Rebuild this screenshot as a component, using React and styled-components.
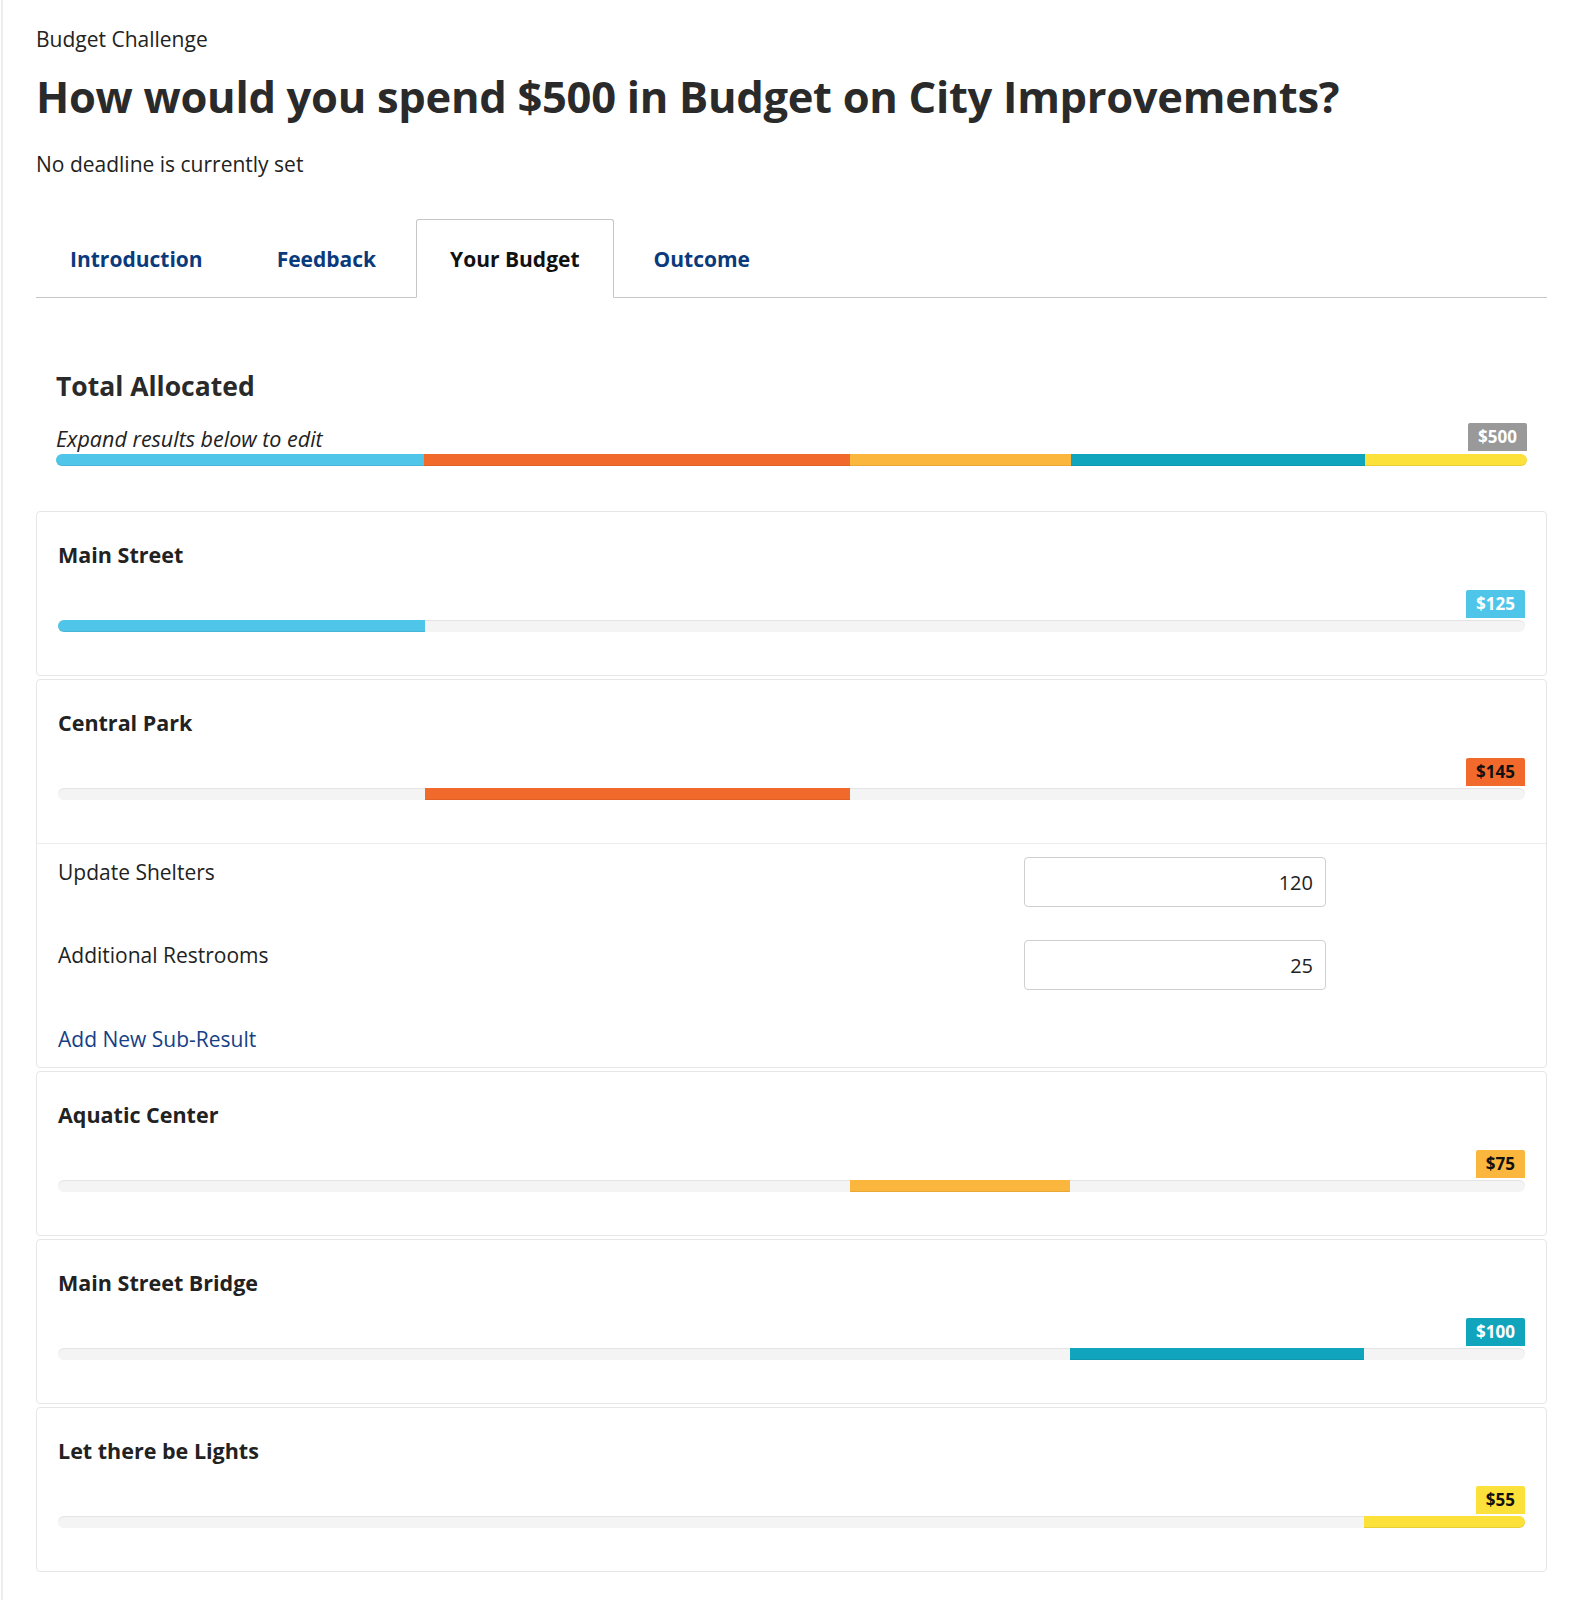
import styled, { createGlobalStyle } from "styled-components";

const GlobalStyle = createGlobalStyle`
  body {
    margin: 0;
    background: #fff;
    font-family: "Open Sans", "Liberation Sans", sans-serif;
    color: #222;
  }
  * { box-sizing: border-box; }
`;

const TOTAL = 500;

const results = [
  { name: "Main Street", amount: 125, color: "#4fc6e9", text: "#fff" },
  {
    name: "Central Park",
    amount: 145,
    color: "#f26a2b",
    text: "#111",
    subs: [
      { name: "Update Shelters", value: 120 },
      { name: "Additional Restrooms", value: 25 },
    ],
  },
  { name: "Aquatic Center", amount: 75, color: "#fbb73d", text: "#111" },
  { name: "Main Street Bridge", amount: 100, color: "#11a5bd", text: "#fff" },
  { name: "Let there be Lights", amount: 55, color: "#fde13b", text: "#111" },
];

const tabs = ["Introduction", "Feedback", "Your Budget", "Outcome"];

export default function App() {
  let offset = 0;
  const rows = results.map((r) => {
    const row = { ...r, start: offset };
    offset += r.amount;
    return row;
  });

  return (
    <>
      <GlobalStyle />
      <Page>
        <Kicker>Budget Challenge</Kicker>
        <Title>How would you spend $500 in Budget on City Improvements?</Title>
        <Deadline>No deadline is currently set</Deadline>

        <TabList>
          {tabs.map((t) => (
            <Tab key={t} $active={t === "Your Budget"}>
              {t}
            </Tab>
          ))}
        </TabList>

        <Summary>
          <SummaryTitle>Total Allocated</SummaryTitle>
          <BarHead>
            <Hint>Expand results below to edit</Hint>
            <Badge $bg="#999" $fg="#fff">$500</Badge>
          </BarHead>
          <Track $bare>
            {rows.map((r, i) => (
              <Fill
                key={r.name}
                $color={r.color}
                $first={i === 0}
                $last={i === rows.length - 1}
                style={{
                  left: `${(r.start / TOTAL) * 100}%`,
                  width: `${(r.amount / TOTAL) * 100}%`,
                }}
              />
            ))}
          </Track>
        </Summary>

        <Cards>
          {rows.map((r, i) => (
            <Card key={r.name}>
              <CardTop>
                <CardTitle>{r.name}</CardTitle>
                <BarHead $right>
                  <Badge $bg={r.color} $fg={r.text}>
                    ${r.amount}
                  </Badge>
                </BarHead>
                <Track>
                  <Fill
                    $color={r.color}
                    $first={i === 0}
                    $last={i === rows.length - 1}
                    style={{
                      left: `${(r.start / TOTAL) * 100}%`,
                      width: `${(r.amount / TOTAL) * 100}%`,
                    }}
                  />
                </Track>
              </CardTop>
              {r.subs && (
                <SubList>
                  {r.subs.map((s) => (
                    <SubRow key={s.name}>
                      <SubLabel>{s.name}</SubLabel>
                      <SubInput type="text" defaultValue={s.value} />
                    </SubRow>
                  ))}
                  <AddLink href="#">Add New Sub-Result</AddLink>
                </SubList>
              )}
            </Card>
          ))}
        </Cards>
      </Page>
    </>
  );
}

const Page = styled.main`
  min-height: 100vh;
  margin-left: 1px;
  border-left: 2px solid #ececec;
  padding: 27px 33px 30px 33px;
`;

const Kicker = styled.div`
  font-size: 21px;
  line-height: 24px;
  font-weight: 400;
  color: #222;
`;

const Title = styled.h1`
  margin: 21px 0 0;
  font-size: 43.5px;
  line-height: 50px;
  font-weight: 700;
  color: #2a2a2a;
  letter-spacing: -0.3px;
`;

const Deadline = styled.p`
  margin: 30px 0 0;
  font-size: 21px;
  line-height: 24px;
  font-weight: 400;
  color: #222;
`;

const TabList = styled.nav`
  display: flex;
  gap: 6px;
  margin-top: 43px;
  border-bottom: 1px solid #c6c6c6;
`;

const Tab = styled.div`
  height: 79px;
  margin-bottom: -1px;
  padding: 0 33px;
  display: flex;
  align-items: center;
  font-size: 21px;
  font-weight: 700;
  color: ${(p) => (p.$active ? "#111" : "#0a3a7c")};
  background: ${(p) => (p.$active ? "#fff" : "transparent")};
  border: 1px solid ${(p) => (p.$active ? "#c6c6c6" : "transparent")};
  border-bottom-color: ${(p) => (p.$active ? "#fff" : "transparent")};
  border-radius: 3px 3px 0 0;
`;

const Summary = styled.section`
  margin-top: 73px;
  padding: 0 20px;
`;

const SummaryTitle = styled.h2`
  margin: 0;
  font-size: 26.5px;
  line-height: 30px;
  font-weight: 700;
  color: #2a2a2a;
`;

const BarHead = styled.div`
  display: flex;
  align-items: flex-end;
  justify-content: ${(p) => (p.$right ? "flex-end" : "space-between")};
  margin-top: ${(p) => (p.$right ? "23px" : "22px")};
  margin-bottom: ${(p) => (p.$right ? "2px" : "3px")};
`;

const Hint = styled.em`
  font-size: 21.5px;
  line-height: 24px;
  font-weight: 400;
  color: #222;
`;

const Badge = styled.span`
  display: inline-block;
  padding: 0 10px;
  height: 28px;
  line-height: 28px;
  font-family: "Open Sans", sans-serif;
  font-size: 17px;
  font-weight: 700;
  background: ${(p) => p.$bg};
  color: ${(p) => p.$fg};
  border-radius: 2px 2px 0 0;
`;

const Track = styled.div`
  position: relative;
  height: 12px;
  border-radius: 6px;
  background: ${(p) => (p.$bare ? "transparent" : "#f4f4f4")};
  box-shadow: ${(p) => (p.$bare ? "none" : "inset 0 1px 1px rgba(0, 0, 0, 0.07)")};
`;

const Fill = styled.div`
  position: absolute;
  top: 0;
  bottom: 0;
  background: ${(p) => p.$color};
  box-shadow: inset 0 -1px 0 rgba(0, 0, 0, 0.08);
  border-radius: ${(p) => (p.$first ? "6px 0 0 6px" : p.$last ? "0 6px 6px 0" : "0")};
`;

const Cards = styled.div`
  margin-top: 45px;
  display: flex;
  flex-direction: column;
  gap: 3px;
`;

const Card = styled.article`
  border: 1px solid #e6e6e6;
  border-radius: 4px;
  background: #fff;
`;

const CardTop = styled.div`
  padding: 31px 21px 43px;
`;

const CardTitle = styled.h3`
  margin: 0;
  font-size: 21.5px;
  line-height: 24px;
  font-weight: 700;
  color: #222;
`;

const SubList = styled.div`
  border-top: 1px solid #ececec;
  padding: 13px 21px 16px;
  display: flex;
  flex-direction: column;
  align-items: flex-start;
`;

const SubRow = styled.div`
  display: flex;
  align-items: flex-start;
  width: 100%;
  margin-bottom: 33px;
`;

const SubLabel = styled.span`
  flex: 1;
  padding-top: 3px;
  font-size: 21px;
  line-height: 24px;
  font-weight: 400;
  color: #222;
`;

const SubInput = styled.input`
  width: 302px;
  height: 50px;
  margin-right: 199px;
  padding: 0 12px;
  border: 1px solid #cfcfcf;
  border-radius: 4px;
  text-align: right;
  font-family: "Open Sans", sans-serif;
  font-size: 20px;
  color: #222;
  outline: none;
`;

const AddLink = styled.a`
  margin-top: 4px;
  font-size: 21px;
  line-height: 24px;
  font-weight: 400;
  color: #163f86;
  text-decoration: none;
`;
